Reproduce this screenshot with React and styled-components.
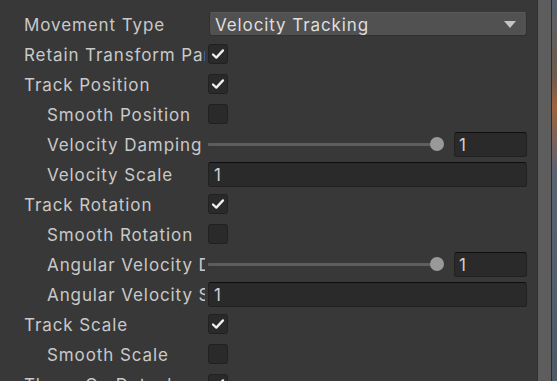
import styled, { createGlobalStyle } from "styled-components";

const GlobalStyle = createGlobalStyle`
    html, body {
        margin: 0;
        padding: 0;
        overflow: hidden;
        background: #383838;
    }
    * {
        box-sizing: border-box;
    }
`;

const Page = styled.div`
    width: 557px;
    height: 381px;
    display: flex;
    overflow: hidden;
    font-family: Inter, "Noto Sans", sans-serif;
`;

const Inspector = styled.div`
    width: 537px;
    padding-top: 9px;
    display: flex;
    flex-direction: column;
    background-color: #383838;
`;

const ScrollStrip = styled.div`
    width: 15px;
    background-color: #5d5d5d;
    border-left: 1px solid #303030;
    border-right: 1px solid #2c2c2c;
`;

const SceneEdge = styled.div`
    width: 5px;
    background: linear-gradient(180deg, #56606c 0%, #6e5a4c 20%, #9a6440 28%, #5a6270 45%, #4f5966 100%);
`;

const Row = styled.div`
    height: 30px;
    flex-shrink: 0;
    display: flex;
    align-items: center;
    padding: 0 10px 0 24px;
`;

const Label = styled.div`
    width: ${(props) => 181 - props.$level * 23}px;
    margin-left: ${(props) => props.$level * 23}px;
    margin-right: 3px;
    padding-top: 2px;
    line-height: 22px;
    overflow: hidden;
    white-space: nowrap;
    color: #c9c9c9;
    font-size: 17px;
    letter-spacing: 0.9px;
`;

const Dropdown = styled.div`
    flex: 1;
    height: 24px;
    margin-left: 1px;
    padding: 2px 10px 0 5px;
    display: flex;
    align-items: center;
    justify-content: space-between;
    background-color: #515151;
    border: 1px solid #303030;
    border-top-color: #585858;
    border-radius: 3px;
    color: #dedede;
    font-size: 17px;
    letter-spacing: 0.9px;
`;

const Arrow = styled.div`
    width: 0;
    height: 0;
    margin-top: -2px;
    border-left: 6px solid transparent;
    border-right: 6px solid transparent;
    border-top: 7px solid #c4c4c4;
`;

const Check = styled.div`
    width: 20px;
    height: 20px;
    display: flex;
    align-items: center;
    justify-content: center;
    background-color: #2a2a2a;
    border: 1px solid #212121;
    border-radius: 3px;
`;

const Slider = styled.div`
    flex: 1;
    margin-right: 10px;
    display: flex;
    align-items: center;
`;

const Track = styled.div`
    flex: 1;
    height: 3px;
    background-color: #5e5e5e;
    border-radius: 1px;
`;

const Knob = styled.div`
    width: 14px;
    height: 14px;
    margin-left: -7px;
    border-radius: 50%;
    background-color: #999999;
`;

const Field = styled.div`
    ${(props) => props.$small ? "width: 73px;" : "flex: 1;"}
    height: 25px;
    padding: 2px 0 0 ${(props) => props.$small ? 4 : 5}px;
    display: flex;
    align-items: center;
    background-color: #2a2a2a;
    border: 1px solid #212121;
    border-top-color: #0e0e0e;
    border-radius: 3px;
    color: #d2d2d2;
    font-size: 17px;
`;

const CheckMark = () => (
    <svg width="14" height="12" viewBox="0 0 14 12">
        <path d="M2 6.5 L5.3 9.6 L12 2.4" fill="none" stroke="#f0f0f0" strokeWidth="2.3" strokeLinecap="round" strokeLinejoin="round" />
    </svg>
);

const rows = [
    { label: "Movement Type", level: 0, kind: "dropdown", value: "Velocity Tracking" },
    { label: "Retain Transform Parent", level: 0, kind: "check", checked: true },
    { label: "Track Position", level: 0, kind: "check", checked: true },
    { label: "Smooth Position", level: 1, kind: "check", checked: false },
    { label: "Velocity Damping", level: 1, kind: "slider", value: "1" },
    { label: "Velocity Scale", level: 1, kind: "field", value: "1" },
    { label: "Track Rotation", level: 0, kind: "check", checked: true },
    { label: "Smooth Rotation", level: 1, kind: "check", checked: false },
    { label: "Angular Velocity Damping", level: 1, kind: "slider", value: "1" },
    { label: "Angular Velocity Scale", level: 1, kind: "field", value: "1" },
    { label: "Track Scale", level: 0, kind: "check", checked: true },
    { label: "Smooth Scale", level: 1, kind: "check", checked: false },
    { label: "Throw On Detach", level: 0, kind: "check", checked: true },
];

const Control = ({ row }) => {
    if (row.kind === "dropdown") {
        return <Dropdown>
            {row.value}
            <Arrow />
        </Dropdown>
    }
    if (row.kind === "check") {
        return <Check>{row.checked && <CheckMark />}</Check>
    }
    if (row.kind === "slider") {
        return <>
            <Slider>
                <Track />
                <Knob />
            </Slider>
            <Field $small>{row.value}</Field>
        </>
    }
    return <Field>{row.value}</Field>
};

export default function App() {
    return <>
        <GlobalStyle />
        <Page>
            <Inspector>
                {rows.map((row, index) => {
                    return <Row key={index}>
                        <Label $level={row.level}>{row.label}</Label>
                        <Control row={row} />
                    </Row>
                })}
            </Inspector>
            <ScrollStrip />
            <SceneEdge />
        </Page>
    </>;
}
